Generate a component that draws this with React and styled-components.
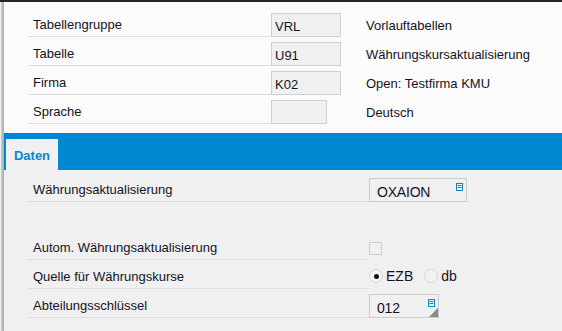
import React from "react";
import styled, { createGlobalStyle } from "styled-components";

const GlobalStyle = createGlobalStyle`
  html, body {
    margin: 0;
    padding: 0;
    background: #f0f0f0;
  }
  body {
    font-family: "Liberation Sans", Arial, sans-serif;
    font-size: 13px;
    color: #14141e;
  }
`;

const Frame = styled.div`
  width: 562px;
  height: 331px;
  display: flex;
  flex-direction: column;
  overflow: hidden;
  background: #f0f0f0;
`;

const TopLine = styled.div`
  height: 2px;
  background: #262626;
  flex: none;
`;

const Body = styled.div`
  flex: 1;
  display: flex;
  padding-left: 1px;
`;

const LeftEdge = styled.div`
  width: 3px;
  flex: none;
  background: linear-gradient(to right, #d0d0d0, #a8a8a8);
`;

const Main = styled.div`
  flex: 1;
  display: flex;
  flex-direction: column;
`;

const Header = styled.div`
  background: #fbfbfb;
  padding: 6px 0 9px 24px;
  height: 131px;
  box-sizing: border-box;
`;

const HeadRow = styled.div`
  display: grid;
  grid-template-columns: 243px 95px 1fr;
  height: 29px;
`;

const Label = styled.div`
  display: flex;
  align-items: center;
  padding: 5px 0 0 5px;
  border-bottom: 1px solid #dedede;
`;

const Cell = styled.div`
  display: flex;
  align-items: ${({ $align }) => $align || "flex-end"};
  padding-top: ${({ $pt }) => $pt || 0}px;
  padding-bottom: ${({ $pb }) => $pb || 0}px;
  box-sizing: border-box;
`;

const Description = styled.div`
  display: flex;
  align-items: center;
  padding-top: 5px;
`;

const ReadField = styled.div`
  width: ${({ $w }) => $w}px;
  height: 24px;
  box-sizing: border-box;
  border: 1px solid #cfcfcf;
  background: #f0f0f0;
  padding: 3px 0 0 3px;
  display: flex;
  align-items: center;
`;

const TabBar = styled.div`
  height: 37px;
  background: #0089d3;
  display: flex;
  align-items: flex-end;
  padding-left: 2px;
`;

const Tab = styled.div`
  width: 52px;
  height: 31px;
  background: #f0f0f0;
  color: #0a86d0;
  font-weight: bold;
  display: flex;
  align-items: center;
  justify-content: center;
  padding-top: 1px;
  box-sizing: border-box;
`;

const Content = styled.div`
  padding: 3px 0 0 24px;
`;

const FormRow = styled.div`
  display: grid;
  grid-template-columns: 341px 1fr;
  height: 29px;
`;

const FormLabel = styled(Label)`
  border-bottom-color: ${({ $noLine }) => ($noLine ? "transparent" : "#dedede")};
`;

const LookupField = styled.div`
  position: relative;
  width: ${({ $w }) => $w}px;
  height: 24px;
  box-sizing: border-box;
  border: 1px solid #cbcbcb;
  background: #f0f0f0;
  padding: 3px 0 0 7px;
  display: flex;
  align-items: center;
  font-size: 14px;
  letter-spacing: -0.2px;
`;

const ListIcon = styled.svg`
  position: absolute;
  top: 4px;
  right: 3px;
`;

const Grip = styled.div`
  position: absolute;
  right: 0;
  bottom: 0;
  width: 0;
  height: 0;
  border-style: solid;
  border-width: 0 0 9px 9px;
  border-color: transparent transparent #8a8a8a transparent;
`;

const CheckBox = styled.div`
  width: 13px;
  height: 13px;
  box-sizing: border-box;
  border: 1px solid #cdcdcd;
  background: #f0f0f0;
`;

const RadioGroup = styled.div`
  display: flex;
  align-items: center;
  gap: 3px;
`;

const Radio = styled.div`
  width: 14px;
  height: 14px;
  box-sizing: border-box;
  border-radius: 50%;
  border: 1px solid #d6d6d6;
  background: #f3f3f3;
  display: flex;
  align-items: center;
  justify-content: center;
  margin-left: ${({ $gap }) => $gap || 0}px;
  &::after {
    content: "";
    width: 5px;
    height: 5px;
    border-radius: 50%;
    background: ${({ $checked }) => ($checked ? "#111" : "transparent")};
  }
`;

const RadioText = styled.span`
  font-size: 14px;
`;

function Lookup({ value, width, grip }) {
  return (
    <LookupField $w={width}>
      {value}
      <ListIcon width="7" height="8" viewBox="0 0 7 8">
        <rect x="0.5" y="0.5" width="6" height="7" fill="#fff" stroke="#0a86d0" />
        <rect x="1.5" y="2" width="4" height="1" fill="#0a86d0" />
        <rect x="1.5" y="4" width="4" height="1" fill="#0a86d0" />
      </ListIcon>
      {grip && <Grip />}
    </LookupField>
  );
}

const header = [
  { label: "Tabellengruppe", value: "VRL", desc: "Vorlauftabellen", w: 70 },
  { label: "Tabelle", value: "U91", desc: "Währungskursaktualisierung", w: 70 },
  { label: "Firma", value: "K02", desc: "Open: Testfirma KMU", w: 70 },
  { label: "Sprache", value: "", desc: "Deutsch", w: 56 },
];

export default function App() {
  return (
    <>
      <GlobalStyle />
      <Frame>
        <TopLine />
        <Body>
          <LeftEdge />
          <Main>
            <Header>
              {header.map((r) => (
                <HeadRow key={r.label}>
                  <Label>{r.label}</Label>
                  <Cell>
                    <ReadField $w={r.w}>{r.value}</ReadField>
                  </Cell>
                  <Description>{r.desc}</Description>
                </HeadRow>
              ))}
            </Header>
            <TabBar>
              <Tab>Daten</Tab>
            </TabBar>
            <Content>
              <FormRow>
                <FormLabel>Währungsaktualisierung</FormLabel>
                <Cell>
                  <Lookup value="OXAION" width={98} />
                </Cell>
              </FormRow>
              <FormRow>
                <FormLabel $noLine />
                <Cell />
              </FormRow>
              <FormRow>
                <FormLabel>Autom. Währungsaktualisierung</FormLabel>
                <Cell $pb={5}>
                  <CheckBox />
                </Cell>
              </FormRow>
              <FormRow>
                <FormLabel>Quelle für Währungskurse</FormLabel>
                <Cell $pb={5}>
                  <RadioGroup>
                    <Radio $checked />
                    <RadioText>EZB</RadioText>
                    <Radio $gap={8} />
                    <RadioText>db</RadioText>
                  </RadioGroup>
                </Cell>
              </FormRow>
              <FormRow>
                <FormLabel>Abteilungsschlüssel</FormLabel>
                <Cell>
                  <Lookup value="012" width={70} grip />
                </Cell>
              </FormRow>
            </Content>
          </Main>
        </Body>
      </Frame>
    </>
  );
}
